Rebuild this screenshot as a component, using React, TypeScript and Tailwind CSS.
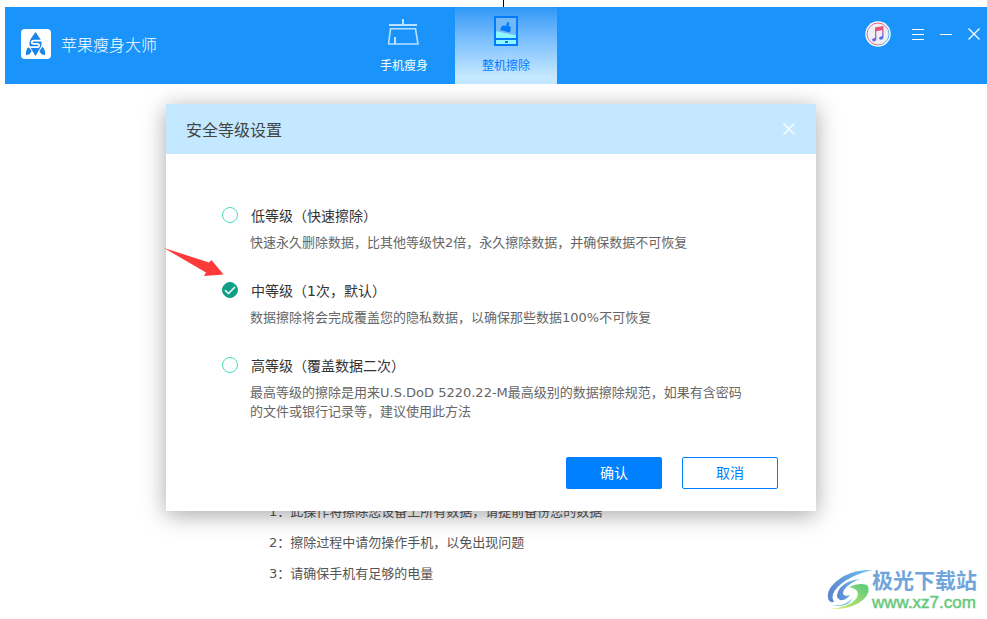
import { useState } from "react";

const levels = [
  {
    id: "low",
    title: "低等级（快速擦除）",
    description: "快速永久删除数据，比其他等级快2倍，永久擦除数据，并确保数据不可恢复",
  },
  {
    id: "medium",
    title: "中等级（1次，默认）",
    description: "数据擦除将会完成覆盖您的隐私数据，以确保那些数据100%不可恢复",
  },
  {
    id: "high",
    title: "高等级（覆盖数据二次）",
    description:
      "最高等级的擦除是用来U.S.DoD 5220.22-M最高级别的数据擦除规范，如果有含密码的文件或银行记录等，建议使用此方法",
  },
];

const notes = [
  "1：此操作将擦除您设备上所有数据，请提前备份您的数据",
  "2：擦除过程中请勿操作手机，以免出现问题",
  "3：请确保手机有足够的电量",
];

function AppLogo() {
  return (
    <svg className="h-[30px] w-[30px]" viewBox="0 0 30 30" aria-hidden="true">
      <rect width="30" height="30" rx="4" fill="#fff" />
      <path d="M14.5 3 L19 9.5 Q21.5 13.5 20 17.5 L14.5 27 L9 18 Q7.5 13.5 10 9.5 Z" fill="#1b84e8" />
      <path d="M7.6 17.8 Q4.5 20.5 5 26.3 L8.8 25 L10.6 22 Z" fill="#1b84e8" />
      <path d="M21.4 17.8 Q24.5 20.5 24 26.3 L20.2 25 L18.4 22 Z" fill="#1b84e8" />
      <path d="M21 11.6 H13.2 Q10.6 11.6 10.6 13.3 Q10.6 14.9 13 14.9 H16 Q18.4 14.9 18.2 16.6 Q18 18.2 15.5 18.2 H7.5" fill="none" stroke="#fff" strokeWidth="1.7" />
    </svg>
  );
}

function BroomIcon() {
  return (
    <svg className="h-8 w-8" viewBox="0 0 32 32" fill="none" stroke="#b9e0ff" aria-hidden="true">
      <path d="M15 4 V9" strokeWidth="2" />
      <path d="M1 10 H29" strokeWidth="2" />
      <path d="M2.5 13.8 H27.5 L30 29 H0.5 Z" strokeWidth="1.6" />
      <path d="M7 22 V29" strokeWidth="2" />
    </svg>
  );
}

function PhoneIcon() {
  return (
    <svg className="h-8 w-8" viewBox="0 0 32 32" aria-hidden="true">
      <rect x="5" y="2" width="22" height="28" fill="#74b8f4" />
      <path d="M5 16 L27 20.5 V30 H5 Z" fill="#8ff7ff" />
      <rect x="5" y="2" width="22" height="28" fill="none" stroke="#007bff" strokeWidth="2" />
      <path d="M4 24 H28" stroke="#007bff" strokeWidth="2" />
      <rect x="15" y="26" width="3" height="2" fill="#007bff" />
      <path d="M17.5 7 L19.5 7.8 L18.5 11 L21 12 L20 17.5 L10 15 L12 10.8 L16 10.8 Z" fill="#007bff" />
    </svg>
  );
}

function MusicIcon() {
  return (
    <svg className="h-[26px] w-[26px]" viewBox="0 0 26 26" aria-hidden="true">
      <defs>
        <linearGradient id="ring" x1="0" y1="0.3" x2="1" y2="0.7">
          <stop offset="0" stopColor="#c56be0" />
          <stop offset="0.45" stopColor="#fb5d6d" />
          <stop offset="1" stopColor="#35c8fa" />
        </linearGradient>
        <linearGradient id="note" x1="0.3" y1="0" x2="0.6" y2="1">
          <stop offset="0" stopColor="#f2475c" />
          <stop offset="0.45" stopColor="#d8609f" />
          <stop offset="0.75" stopColor="#6a62ea" />
          <stop offset="1" stopColor="#3f7df0" />
        </linearGradient>
      </defs>
      <circle cx="13" cy="13" r="12.7" fill="#fff" />
      <circle cx="13" cy="13" r="11" fill="#efeff2" stroke="url(#ring)" />
      <path d="M10 6.6 L18.5 5 V16.3 Q18.5 18.6 16 18.8 Q13.8 18.6 14 17 Q14.3 15.3 17.2 15.2 V9.2 L11.3 10.3 V18.3 Q11.2 20.3 9 20.5 Q6.8 20.3 7 18.6 Q7.4 17 10 16.9 Z" fill="url(#note)" />
    </svg>
  );
}

function CloseIcon() {
  return (
    <svg className="h-3 w-3" viewBox="0 0 12 12" stroke="currentColor" strokeWidth="1.3" aria-hidden="true">
      <path d="M0.5 0.5 L11.5 11.5 M11.5 0.5 L0.5 11.5" />
    </svg>
  );
}

function Header() {
  return (
    <header className="ml-[5px] flex h-[77px] bg-[#1a94fa] text-white">
      <div className="flex w-[348px] shrink-0 items-center gap-[10px] pb-1 pl-4">
        <AppLogo />
        <h1 className="pt-1 text-base font-light">苹果瘦身大师</h1>
      </div>
      <nav className="flex shrink-0 text-xs leading-5">
        <button className="flex w-[102px] flex-col items-center gap-[9px] pt-2">
          <BroomIcon />
          手机瘦身
        </button>
        <button className="flex w-[102px] flex-col items-center gap-[9px] bg-linear-to-b from-[#2a98f7] to-[#c4e8ff] to-90% pt-2 text-[#007bff]">
          <PhoneIcon />
          整机擦除
        </button>
      </nav>
      <div className="ml-auto flex h-[54px] items-center gap-4 pr-[7px]">
        <button className="mr-[5px]" aria-label="音乐">
          <MusicIcon />
        </button>
        <button aria-label="菜单">
          <svg className="h-3 w-3" viewBox="0 0 12 12" stroke="#fff" aria-hidden="true">
            <path d="M0 1.5 H12 M0 6.5 H12 M0 11.5 H12" />
          </svg>
        </button>
        <button aria-label="最小化">
          <svg className="h-3 w-3" viewBox="0 0 12 12" stroke="#fff" aria-hidden="true">
            <path d="M0 6.5 H12" />
          </svg>
        </button>
        <button aria-label="关闭">
          <CloseIcon />
        </button>
      </div>
    </header>
  );
}

function SecurityDialog() {
  const [selected, setSelected] = useState("medium");

  return (
    <div
      role="dialog"
      aria-labelledby="dialog-title"
      className="relative w-[650px] bg-white shadow-[0_4px_22px_rgba(0,0,0,0.35)]"
    >
      <div className="flex h-[50px] items-center justify-between bg-[#c3e8ff] pr-[21px] pl-5">
        <h2 id="dialog-title" className="pt-1 text-base text-[#444]">安全等级设置</h2>
        <button className="text-white" aria-label="关闭">
          <CloseIcon />
        </button>
      </div>

      <div className="flex flex-col gap-7 pt-[51px] pr-[70px] pl-14">
        {levels.map((level) => (
          <div key={level.id}>
            <label className="flex h-5 items-center gap-[13px] text-sm text-[#333]">
              <span className="grid h-4 w-4">
                <input
                  type="radio"
                  name="level"
                  checked={selected === level.id}
                  onChange={() => setSelected(level.id)}
                  className="peer col-start-1 row-start-1 h-4 w-4 appearance-none rounded-full border border-[#45dfbd] checked:border-[#109f87] checked:bg-[#109f87]"
                />
                <svg
                  className="pointer-events-none invisible col-start-1 row-start-1 h-4 w-4 peer-checked:visible"
                  viewBox="0 0 16 16"
                  fill="none"
                  stroke="#fff"
                  strokeWidth="1.5"
                  aria-hidden="true"
                >
                  <path d="M3 8.2 L6.5 11.5 L13 5" />
                </svg>
              </span>
              <span className="pt-0.5">{level.title}</span>
            </label>
            <p className="mt-2 pl-7 text-[13px] leading-[19px] text-[#666]">{level.description}</p>
          </div>
        ))}
      </div>

      <div className="flex justify-end gap-5 pt-9 pr-[38px] pb-[22px] text-sm">
        <button className="h-8 w-24 rounded-xs bg-[#0080ff] text-white">确认</button>
        <button className="h-8 w-24 rounded-xs border border-[#0080ff] text-[#0080ff]">取消</button>
      </div>

      {/* pointer to the recommended level */}
      <svg className="absolute top-36 -left-0.5 h-7 w-[60px]" viewBox="0 0 60 28" aria-hidden="true">
        <path d="M0 0 L45 14.5 L47.5 12 L59.5 26.5 L40 28 L42 24.5 Z" fill="#fd3a3a" />
      </svg>
    </div>
  );
}

function Watermark() {
  return (
    <div className="absolute right-[10px] bottom-[6px] flex items-center font-['Liberation_Sans','Noto_Sans_CJK_SC',sans-serif]">
      <svg className="h-[44px] w-[45px]" viewBox="0 0 45 44" aria-hidden="true">
        <defs>
          <linearGradient id="swirl" x1="0" y1="0" x2="1" y2="0">
            <stop offset="0" stopColor="#5b83cf" />
            <stop offset="1" stopColor="#6cc8f2" />
          </linearGradient>
          <linearGradient id="leaf" x1="0" y1="1" x2="1" y2="0">
            <stop offset="0" stopColor="#e0ea70" />
            <stop offset="1" stopColor="#55c97b" />
          </linearGradient>
        </defs>
        <path d="M45 1 Q30 0 17 7 Q-1 18 1 29 Q2 34 7 33 Q2 25 14 15 Q25 6 45 1 Z" fill="url(#swirl)" />
        <path d="M33 10 Q20 11 13 19 Q7 28 13 31 Q19 32 23 26 Q18 28 16 25 Q16 17 33 10 Z" fill="url(#swirl)" />
        <path d="M22 18 Q32 13 40 16 Q45 22 36 31 Q24 41 3 40 Q22 38 29 30 Q35 21 22 18 Z" fill="url(#leaf)" />
        <path d="M4 36 Q17 38 26 29 Q20 40 4 36 Z" fill="#79c9cf" />
      </svg>
      <div>
        <p className="text-[21px] leading-6 font-bold text-[#70a5dc]">极光下载站</p>
        <p className="text-[17px] leading-5 text-[#68c97c] [-webkit-text-stroke:0.5px_#68c97c]">www.xz7.com</p>
      </div>
    </div>
  );
}

export default function App() {
  return (
    <div lang="zh-CN" className="relative min-h-screen bg-white font-['DejaVu_Sans','Noto_Sans_CJK_SC',sans-serif]">
      <div className="flex h-[7px] justify-center pl-5">
        <div className="w-px bg-black" />
      </div>
      <Header />

      <main className="pt-[412px] pl-[269px] text-[13px] leading-[31px] text-[#555]">
        {notes.map((note) => (
          <p key={note}>{note}</p>
        ))}
      </main>

      <div className="absolute inset-x-0 top-0 flex justify-center pt-[104px] pr-[5px]">
        <SecurityDialog />
      </div>
      <Watermark />
    </div>
  );
}
